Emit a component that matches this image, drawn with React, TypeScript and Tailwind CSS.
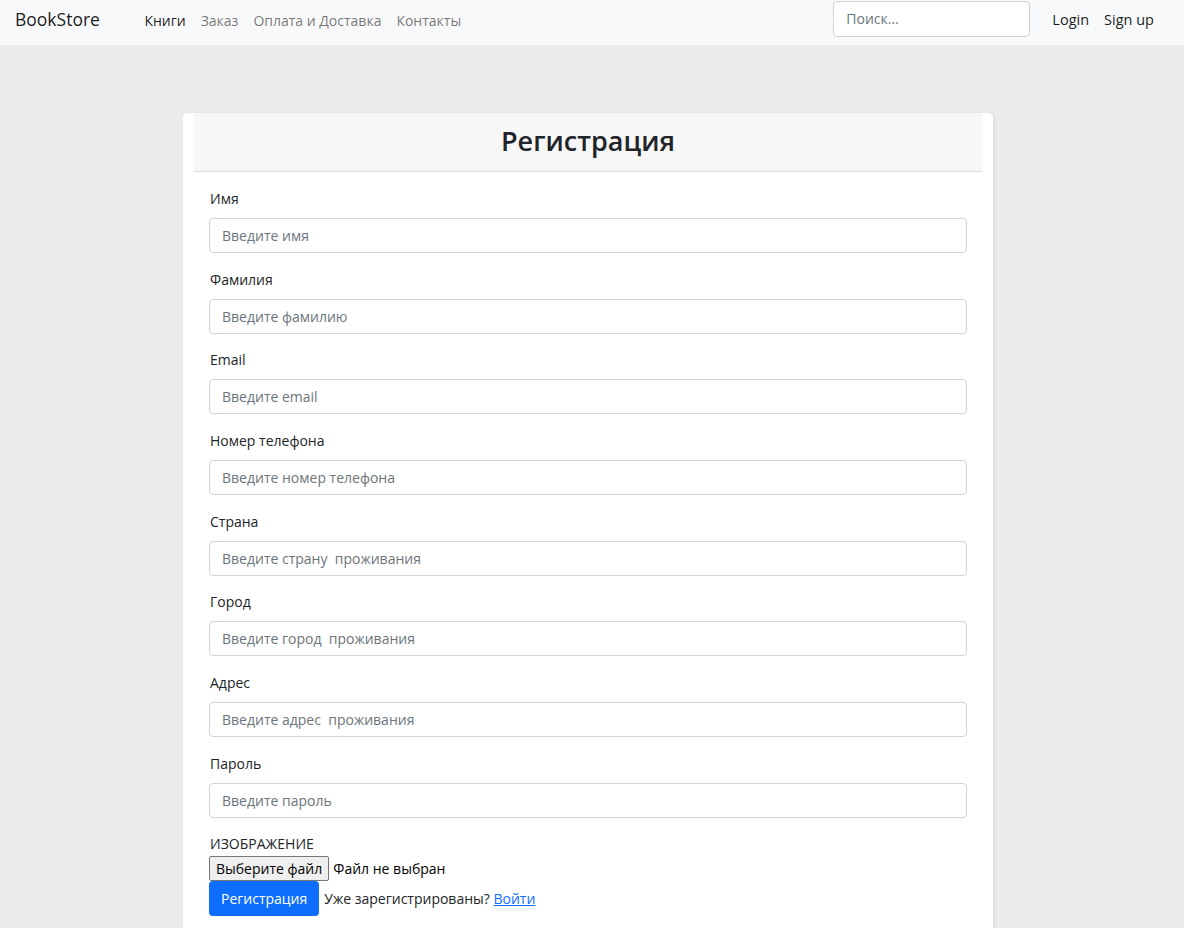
const fields = [
  { label: "Имя", placeholder: "Введите имя", type: "text" },
  { label: "Фамилия", placeholder: "Введите фамилию", type: "text" },
  { label: "Email", placeholder: "Введите email", type: "email" },
  { label: "Номер телефона", placeholder: "Введите номер телефона", type: "tel" },
  { label: "Страна", placeholder: "Введите страну  проживания", type: "text" },
  { label: "Город", placeholder: "Введите город  проживания", type: "text" },
  { label: "Адрес", placeholder: "Введите адрес  проживания", type: "text" },
  { label: "Пароль", placeholder: "Введите пароль", type: "password" },
];

const navLinks = [
  { label: "Книги", active: true },
  { label: "Заказ" },
  { label: "Оплата и Доставка" },
  { label: "Контакты" },
];

export default function App() {
  return (
    <div
      className="min-h-screen bg-[#eaebed] text-[#212529]"
      style={{ fontFamily: '"Open Sans", "Noto Sans", sans-serif' }}
    >
      {/* Navbar */}
      <nav className="flex h-[45px] items-center bg-[#f8f9fa] pl-[15px] pr-[30px]">
        <a href="#" className="mb-[6px] text-[17.5px] text-black/90">
          BookStore
        </a>
        <ul className="mb-[6px] ml-[37px] flex items-center">
          {navLinks.map((link) => (
            <li key={link.label}>
              <a
                href="#"
                className={
                  "px-[7.5px] text-[14px] " +
                  (link.active ? "text-black/90" : "text-black/55")
                }
              >
                {link.label}
              </a>
            </li>
          ))}
        </ul>
        <div className="ml-auto flex items-center">
          <input
            type="search"
            placeholder="Поиск..."
            className="mb-[8px] h-[36px] w-[197px] rounded-[4px] border border-[#ced4da] bg-white px-[12px] text-[14px] placeholder:text-[#6c757d] focus:outline-none"
          />
          <a href="#" className="mb-[6px] ml-[22px] text-[14.5px] text-black/90">
            Login
          </a>
          <a href="#" className="mb-[6px] ml-[15px] text-[14.5px] text-black/90">
            Sign up
          </a>
        </div>
      </nav>

      {/* Registration card */}
      <main className="flex justify-center pt-[68px] pr-[8px]">
        <div className="w-[810px] rounded-t-[5px] bg-white shadow-[2px_0_3px_rgba(0,0,0,0.06)]">
          <div className="mx-[11px] flex h-[59px] items-center justify-center border-b border-[#dcdcdc] bg-[#f7f7f7]">
            <h1 className="-mt-[2px] text-[27px] font-semibold text-[#212529]">Регистрация</h1>
          </div>

          <form className="px-[26px] pt-[15px] pb-[28px]" onSubmit={(e) => e.preventDefault()}>
            {fields.map((f) => (
              <div key={f.label} className="mb-[14.67px]">
                <label className="block pl-[1px] text-[14px] leading-[24px]">{f.label}</label>
                <input
                  type={f.type}
                  placeholder={f.placeholder}
                  className="mt-[7px] block h-[35px] w-full rounded-[4px] border border-[#ced4da] bg-white px-[12px] text-[14px] placeholder:text-[#6c757d] focus:outline-none"
                />
              </div>
            ))}

            <div className="pl-[1px] text-[14px] leading-[24px]">ИЗОБРАЖЕНИЕ</div>
            <div className="flex items-center">
              <span className="flex h-[25px] items-center rounded-[2px] border border-[#767676] bg-[#efefef] px-[6px] text-[14px] text-black">
                Выберите файл
              </span>
              <span className="ml-[4px] text-[14px] text-black">Файл не выбран</span>
            </div>
            <div className="flex items-center">
              <button
                type="submit"
                className="h-[35px] rounded-[4px] bg-[#0d6efd] px-[12px] text-[14px] text-white"
              >
                Регистрация
              </button>
              <span className="ml-[5px] text-[14px]">
                Уже зарегистрированы?{" "}
                <a href="#" className="text-[#0d6efd] underline">
                  Войти
                </a>
              </span>
            </div>
          </form>
        </div>
      </main>
    </div>
  );
}
